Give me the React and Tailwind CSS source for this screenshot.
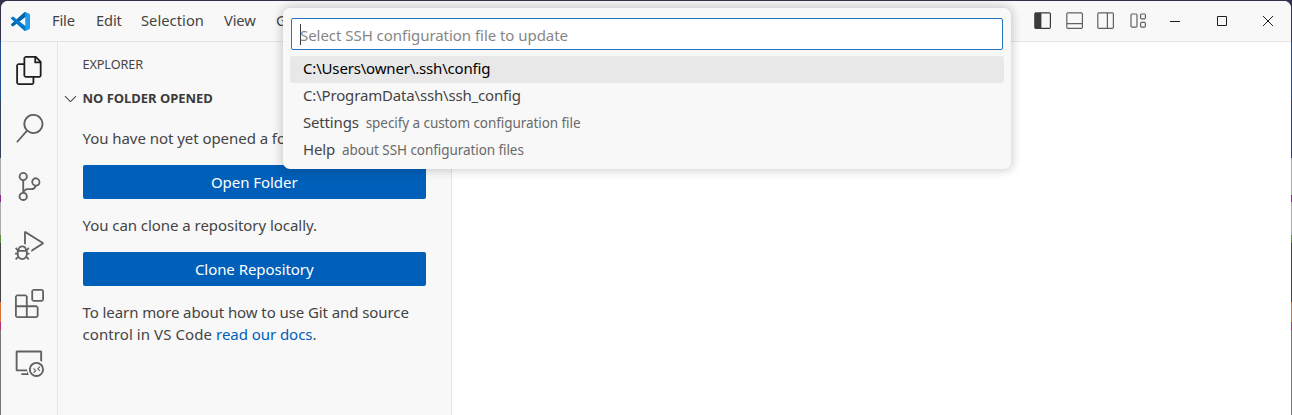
import React from "react";
import {
  VscFiles, VscSearch, VscSourceControl, VscDebugAlt, VscExtensions, VscRemoteExplorer,
  VscLayoutSidebarLeft, VscLayoutPanelOff, VscLayoutSidebarRightOff, VscLayout, VscChevronDown,
} from "react-icons/vsc";

function Logo() {
  return (
    <svg viewBox="0 0 100 100" className="h-[19px] w-[19px] shrink-0">
      <path d="M96.5 10.8 75.9.9a6.2 6.2 0 0 0-7.1 1.2L1.3 63.6a4.2 4.2 0 0 0 0 6.2l5.500 5a4.200 4.200 0 0 0 5.400.2L93.400 13.400A4.100 4.100 0 0 1 100 16.700v-.2a6.300 6.300 0 0 0-3.500-5.700z" fill="#0065A9" />
      <path d="m96.500 89.200-20.600 9.900a6.200 6.200 0 0 1-7.100-1.200L1.300 36.400a4.200 4.200 0 0 1 0-6.200l5.500-5a4.200 4.200 0 0 1 5.400-.2l81.200 61.600a4.100 4.100 0 0 0 6.600-3.300v.2a6.300 6.300 0 0 1-3.500 5.700z" fill="#007ACC" />
      <path d="M75.900 99.100a6.200 6.200 0 0 1-7.100-1.200c2.300 2.300 6.200.7 6.200-2.600V4.700c0-3.300-3.900-4.900-6.200-2.600a6.200 6.200 0 0 1 7.100-1.200l20.600 9.900a6.300 6.300 0 0 1 3.500 5.600v67.200a6.300 6.300 0 0 1-3.500 5.600z" fill="#1F9CF0" />
    </svg>
  );
}

const activities = [
  { Icon: VscFiles, color: "text-[#1f1f1f]" },
  { Icon: VscSearch, color: "text-[#616161]" },
  { Icon: VscSourceControl, color: "text-[#616161]" },
  { Icon: VscDebugAlt, color: "text-[#616161]" },
  { Icon: VscExtensions, color: "text-[#616161]" },
  { Icon: VscRemoteExplorer, color: "text-[#616161]" },
];

function TitleBar() {
  return (
    <header className="flex h-[41px] shrink-0 items-center border-b border-[#e5e5e5] bg-[#f8f8f8] pl-[10px]">
      <Logo />
      <nav className="-mt-[2px] ml-[22px] flex text-[14.700px] tracking-[-0.150px] text-[#444]">
        <span className="w-[44px]">File</span>
        <span className="w-[45px]">Edit</span>
        <span className="w-[83px] tracking-[0.050px]">Selection</span>
        <span className="w-[52px]">View</span>
        <span>Go</span>
      </nav>
      <div className="ml-auto flex items-center text-[#616161]">
        <div className="mr-[5px] flex gap-[12.500px] text-[19.200px]">
          <VscLayoutSidebarLeft className="text-[#3b3b3b]" />
          <VscLayoutPanelOff />
          <VscLayoutSidebarRightOff />
          <VscLayout />
        </div>
        {["M1 6.500h10", "M1.500 1.500h9v9h-9z", "m1 1 10 10M11 1 1 11"].map((d) => (
          <span key={d} className="flex w-[46.300px] justify-center">
            <svg viewBox="0 0 12 12" className="h-3 w-3" fill="none" stroke="#1f1f1f"><path d={d} /></svg>
          </span>
        ))}
      </div>
    </header>
  );
}

function Sidebar() {
  return (
    <aside className="w-[394px] shrink-0 border-r border-[#e5e5e5] bg-[#f8f8f8] text-[#444]">
      <h2 className="ml-[24.500px] mt-[13px] text-[12.700px] leading-[18px] tracking-[-0.100px]">EXPLORER</h2>
      <div className="mt-[16px] flex items-center pl-[3px]">
        <VscChevronDown className="h-[19px] w-[19px]" />
        <span className="ml-[2.500px] text-[13px] font-bold leading-[19px] tracking-[-0.020px] text-[#3b3b3b]">NO FOLDER OPENED</span>
      </div>
      <div className="pl-[24.500px] pr-[25px]">
        <p className="mt-[19px] whitespace-nowrap">You have not yet opened a folder.</p>
        <button className="mt-[16px] block h-[34px] w-full rounded-[2px] bg-[#005fb8] pb-px text-white">Open Folder</button>
        <p className="mt-[15px]">You can clone a repository locally.</p>
        <button className="mt-[16px] block h-[34px] w-full rounded-[2px] bg-[#005fb8] pb-px text-white">Clone Repository</button>
        <p className="mt-[15px] whitespace-nowrap">
          <span className="tracking-[-0.080px]">To learn more about how to use Git and source</span><br />
          <span className="tracking-[0.080px]">control in VS Code </span><span className="text-[#005fb8]">read our docs</span>.
        </p>
      </div>
    </aside>
  );
}

const options = [
  { label: "C:\\Users\\owner\\.ssh\\config" },
  { label: "C:\\ProgramData\\ssh\\ssh_config" },
  { label: "Settings", detail: "specify a custom configuration file" },
  { label: "Help", detail: "about SSH configuration files" },
];

function QuickPick() {
  return (
    <div className="absolute left-[283px] top-[8px] h-[161px] w-[728px] rounded-[7px] bg-[#f8f8f8] px-[7px] pt-[10px] shadow-[0_0_10px_2px_rgba(0,0,0,0.18)]">
      <div className="mx-px flex h-[32px] items-center rounded-[2px] border border-[#2673c0] bg-white pl-[8px] text-[#868686]">
        <span className="h-[21px] w-px bg-[#3b3b3b]" />
        <span className="-ml-px pt-px tracking-[-0.040px]">Select SSH configuration file to update</span>
      </div>
      <ul className="mt-[6px] text-[#444]">
        {options.map(({ label, detail }, i) => (
          <li key={label} className={"flex h-[26.700px] items-baseline rounded-[3px] pl-[13px] tracking-[-0.170px] " + (detail ? "leading-[26px] " : "leading-[25px] ") + (i === 0 ? "bg-[#e8e8e8] text-black" : "")}>
            <span>{label}</span>
            {detail && <span className="ml-[7px] text-[13.500px] tracking-[-0.070px] text-[#696969]">{detail}</span>}
          </li>
        ))}
      </ul>
    </div>
  );
}

export default function App() {
  return (
    <div className="relative h-[415px] w-[1292px] overflow-hidden bg-[linear-gradient(#33324c_0_41px,#1d4f91_41px_100px,#35405f_100px_158px,#aaa_158px_195px,#8b2c8b_195px_202px,#aaa_202px_235px,#5d8a3c_235px_243px,#444_243px_302px,#d9713c_302px_322px,#b03070_322px_330px,#777_330px)] font-['Noto_Sans','Open_Sans',sans-serif] text-[15px] leading-[22px] tracking-[-0.050px]">
      <div className="flex h-full flex-col border-t border-[#33324c]">
        <div className="ml-px mr-px flex min-h-0 flex-1 flex-col overflow-hidden rounded-t-[7px] bg-white">
          <TitleBar />
          <div className="flex min-h-0 flex-1">
            <nav className="flex w-[57px] shrink-0 flex-col border-r border-[#e5e5e5] bg-[#f8f8f8]">
              <div className="-mt-px flex flex-col">
                {activities.map(({ Icon, color }, i) => (
                  <span key={i} className={"flex h-[58.400px] shrink-0 items-center justify-center " + color}>
                    <Icon className="h-[29px] w-[29px]" />
                  </span>
                ))}
              </div>
            </nav>
            <Sidebar />
            <main className="flex-1 bg-white" />
          </div>
        </div>
      </div>
      <QuickPick />
    </div>
  );
}
